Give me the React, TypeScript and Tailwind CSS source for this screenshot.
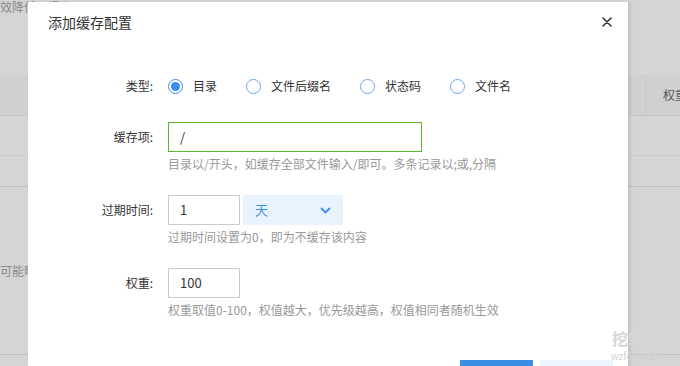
import React from "react";

const font = { fontFamily: '"Noto Sans CJK SC", "Noto Sans", sans-serif' };

function Radio({ checked, label }: { checked?: boolean; label: string }) {
  return (
    <div className="flex items-center">
      <span
        className={
          checked
            ? "w-[15px] h-[15px] rounded-full border border-[#3b8df0] flex items-center justify-center bg-white"
            : "w-[15px] h-[15px] rounded-full border border-[#69a7f2] bg-white"
        }
      >
        {checked && <span className="w-[9px] h-[9px] rounded-full bg-[#3b8df0]" />}
      </span>
      <span className="ml-[10px] text-[12px] text-[#333]">{label}</span>
    </div>
  );
}

export default function App() {
  return (
    <div className="relative w-[680px] h-[366px] overflow-hidden bg-[#d5d5d5]" style={font}>
      {/* background page */}
      <div className="flex flex-col w-full h-full">
        <div className="h-[14px] overflow-hidden">
          <div className="text-[12px] leading-[14px] text-[#8a8a8a] whitespace-nowrap">效降低，提高</div>
        </div>
        <div className="h-[61px]" />
        <div className="h-[41px] bg-[#cfd0d1] border-b border-[#c6c6c6] flex justify-end items-center">
          <div className="h-full border-l border-[#c9c9c9] w-[35px] flex items-center pl-[17px] text-[12px] text-[#555] whitespace-nowrap overflow-hidden">
            权重
          </div>
        </div>
        <div className="h-[40px] border-b border-[#cbcbcb]" />
        <div className="h-[31px] border-b border-[#c2c2c2]" />
        <div className="h-[77px]" />
        <div className="h-[14px] text-[12px] leading-[14px] text-[#8a8a8a] whitespace-nowrap">可能略</div>
        <div className="h-[77px] border-b border-[#c2c2c2]" />
      </div>

      {/* modal */}
      <div className="absolute left-[28px] top-[2px] w-[600px] h-[380px] bg-white shadow-[3px_0_2px_rgba(0,0,0,0.08)]">
        <div className="h-[40px] flex items-center justify-between pl-[20px] pr-[16px]">
          <span className="text-[14px] text-[#333]">添加缓存配置</span>
          <svg width="10" height="10" viewBox="0 0 10 10">
            <path d="M1 1L9 9M9 1L1 9" stroke="#333" strokeWidth="1.6" strokeLinecap="round" />
          </svg>
        </div>

        <div className="pt-[29px] flex flex-col">
          <div className="flex items-center h-[30px]">
            <div className="w-[125px] text-right text-[12px] text-[#333]">类型:</div>
            <div className="ml-[15px] flex items-center gap-[29px]">
              <Radio checked label="目录" />
              <Radio label="文件后缀名" />
              <Radio label="状态码" />
              <Radio label="文件名" />
            </div>
          </div>

          <div className="mt-[21px] flex">
            <div className="w-[125px] text-right text-[12px] text-[#333] leading-[30px]">缓存项:</div>
            <div className="ml-[15px] flex flex-col">
              <div className="w-[254px] h-[30px] border border-[#5cb531] flex items-center pl-[11px] text-[13px] text-[#333]">
                /
              </div>
              <div className="mt-[3px] text-[12px] leading-[18px] text-[#999]">
                目录以/开头，如缓存全部文件输入/即可。多条记录以;或,分隔
              </div>
            </div>
          </div>

          <div className="mt-[22px] flex">
            <div className="w-[125px] text-right text-[12px] text-[#333] leading-[30px]">过期时间:</div>
            <div className="ml-[15px] flex flex-col">
              <div className="flex">
                <div className="w-[72px] h-[30px] border border-[#ccc] flex items-center pl-[11px] text-[13px] text-[#333]">
                  1
                </div>
                <div className="ml-[3px] w-[100px] h-[30px] bg-[#e8f3fe] flex items-center justify-between pl-[12px] pr-[12px]">
                  <span className="text-[13px] text-[#3b8df0]">天</span>
                  <svg width="11" height="7" viewBox="0 0 11 7">
                    <path d="M1 1L5.5 5.5L10 1" stroke="#3b8df0" strokeWidth="1.8" fill="none" />
                  </svg>
                </div>
              </div>
              <div className="mt-[3px] text-[12px] leading-[18px] text-[#999]">过期时间设置为0，即为不缓存该内容</div>
            </div>
          </div>

          <div className="mt-[22px] flex">
            <div className="w-[125px] text-right text-[12px] text-[#333] leading-[30px]">权重:</div>
            <div className="ml-[15px] flex flex-col">
              <div className="w-[72px] h-[30px] border border-[#ccc] flex items-center pl-[11px] text-[13px] text-[#333]">
                100
              </div>
              <div className="mt-[3px] text-[12px] leading-[18px] text-[#999]">
                权重取值0-100，权值越大，优先级越高，权值相同者随机生效
              </div>
            </div>
          </div>

          <div className="mt-[41px] flex justify-end gap-[7px] pr-[15px]">
            <div className="w-[73px] h-[30px] bg-[#3a8ee6]" />
            <div className="w-[73px] h-[30px] bg-[#ecf5ff]" />
          </div>
        </div>
      </div>

      {/* watermark */}
      <div className="absolute left-[608px] top-[330px] w-[56px] flex flex-col items-center gap-[3px] pointer-events-none">
        <span className="text-[16px] leading-[17px] font-bold text-[#d6d6d6]">挖站否</span>
        <span className="text-[10px] leading-[11px] text-[#d2d2d2]">wzfou.com</span>
      </div>
    </div>
  );
}
